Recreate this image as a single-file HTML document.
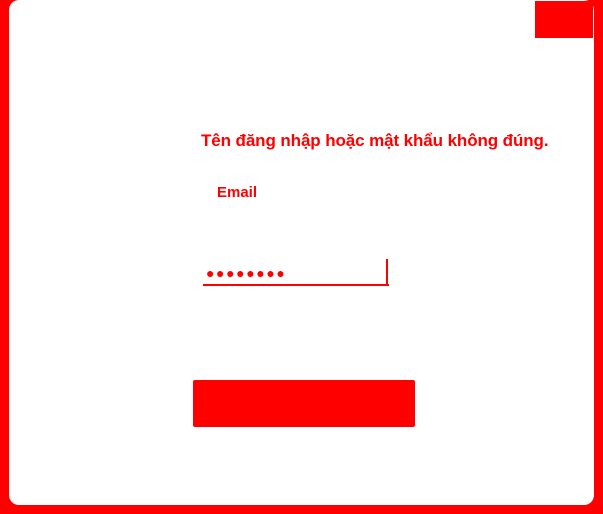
<!DOCTYPE html>
<html><head><meta charset="utf-8"><style>
html,body{margin:0;padding:0}
body{width:603px;height:514px;background:#f00;position:relative;overflow:hidden;font-family:"Liberation Sans","Noto Sans CJK SC",sans-serif}
.panel{position:absolute;left:9px;top:0;width:585px;height:505px;background:#fff;border-radius:10px}
.box{position:absolute;left:535px;top:1px;width:58px;height:37px;background:#f00}
.err{position:absolute;left:201px;top:131px;color:#f00;font-weight:bold;font-size:17px;white-space:nowrap;letter-spacing:-0.1px}
.lbl{position:absolute;left:217px;top:184px;color:#f00;font-weight:bold;font-size:15px}
.dots{position:absolute;left:206px;top:265px;color:#f00;font-size:14px;letter-spacing:1.6px}
.ul{position:absolute;left:203px;top:284px;width:186px;height:2px;background:#f00}
.vl{position:absolute;left:386px;top:259px;width:2px;height:27px;background:#f00}
.btn{position:absolute;left:193px;top:380px;width:222px;height:47px;background:#f00;border-radius:2px}
</style></head><body>
<div class="panel"></div>
<div class="box"></div>
<div class="err">Tên đăng nhập hoặc mật khẩu không đúng.</div>
<div class="lbl">Email</div>
<div class="dots">●●●●●●●●</div>
<div class="ul"></div>
<div class="vl"></div>
<div class="btn"></div>
</body></html>
